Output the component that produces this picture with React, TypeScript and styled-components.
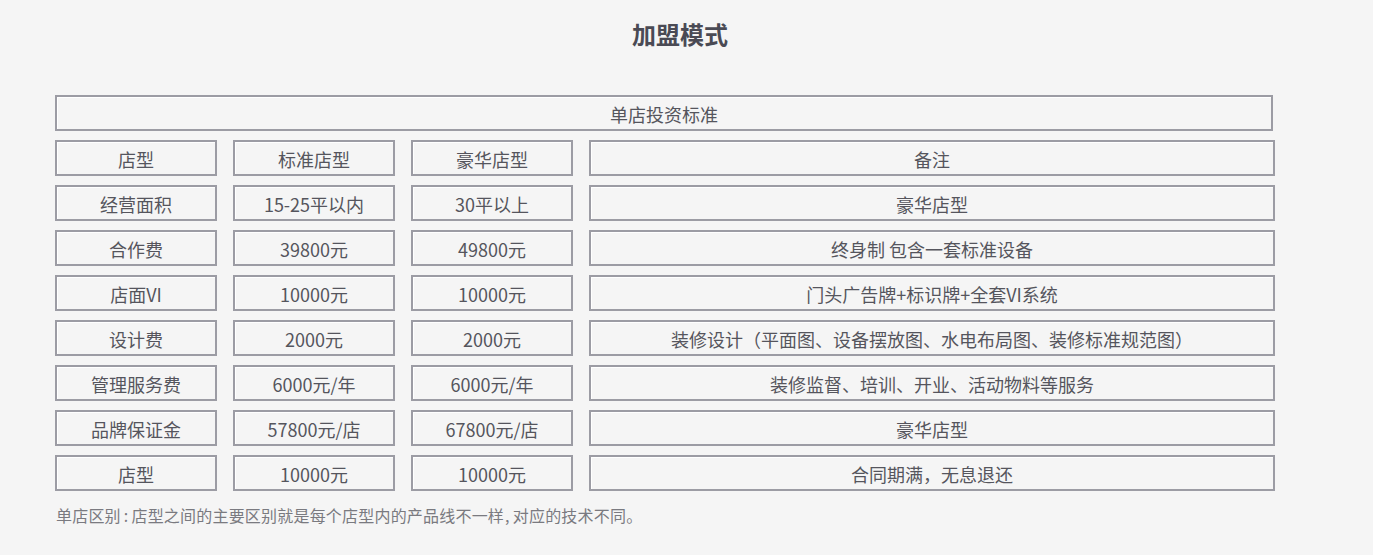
import React from "react";
import styled, { createGlobalStyle } from "styled-components";

const Global = createGlobalStyle`
  html, body { margin: 0; padding: 0; background: #f5f5f5; }
  body { font-family: "Noto Sans CJK SC", "Noto Sans", sans-serif; }
`;

const Page = styled.div`
  width: 1373px;
  height: 555px;
  box-sizing: border-box;
  padding: 17px 0 0 55px;
  background: #f5f5f5;
`;

const Title = styled.h1`
  margin: 0 0 44px 0;
  width: 1250px;
  text-align: center;
  font-size: 24px;
  line-height: 34px;
  font-weight: 700;
  color: #4a4a54;
`;

const Grid = styled.div`
  display: grid;
  grid-template-columns: 162px 162px 162px 686px;
  column-gap: 16px;
  row-gap: 9px;
`;

const Cell = styled.div<{ $span?: boolean }>`
  grid-column: ${(p) => (p.$span ? "1 / -1" : "auto")};
  margin-right: ${(p) => (p.$span ? "2px" : "0")};
  height: 36px;
  box-sizing: border-box;
  padding-top: 2px;
  border: 2px solid #9c9ca4;
  box-shadow: inset 1px 1px 0 #ffffff;
  display: flex;
  align-items: center;
  justify-content: center;
  font-size: 18px;
  color: #55555d;
  white-space: nowrap;
`;

const Note = styled.p`
  margin: 14px 0 0 1px;
  font-size: 16px;
  line-height: 20px;
  letter-spacing: 0.2px;
  color: #7a7a80;
`;

const Punct = styled.span<{ $l: number; $r: number }>`
  margin: 0 ${(p) => p.$r}px 0 ${(p) => p.$l}px;
`;

const rows: string[][] = [
  ["店型", "标准店型", "豪华店型", "备注"],
  ["经营面积", "15-25平以内", "30平以上", "豪华店型"],
  ["合作费", "39800元", "49800元", "终身制 包含一套标准设备"],
  ["店面VI", "10000元", "10000元", "门头广告牌+标识牌+全套VI系统"],
  ["设计费", "2000元", "2000元", "装修设计（平面图、设备摆放图、水电布局图、装修标准规范图）"],
  ["管理服务费", "6000元/年", "6000元/年", "装修监督、培训、开业、活动物料等服务"],
  ["品牌保证金", "57800元/店", "67800元/店", "豪华店型"],
  ["店型", "10000元", "10000元", "合同期满，无息退还"],
];

export default function App() {
  return (
    <>
      <Global />
      <Page>
        <Title>加盟模式</Title>
        <Grid>
          <Cell $span>单店投资标准</Cell>
          {rows.map((r, i) =>
            r.map((c, j) => <Cell key={`${i}-${j}`}>{c}</Cell>)
          )}
        </Grid>
        <Note>
          单店区别<Punct $l={3} $r={3}>:</Punct>店型之间的主要区别就是每个店型内的产品线不一样<Punct $l={1} $r={3}>,</Punct>对应的技术不同。
        </Note>
      </Page>
    </>
  );
}
